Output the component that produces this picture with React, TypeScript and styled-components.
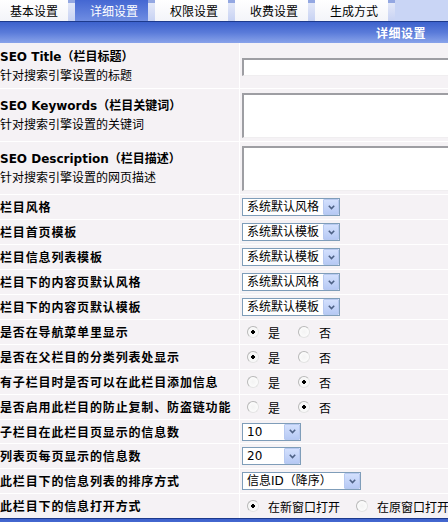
import React from 'react';
import styled, { createGlobalStyle } from 'styled-components';

const GlobalStyle = createGlobalStyle`
  html, body { margin: 0; padding: 0; background: #fff; overflow: hidden; }
  body {
    font-family: "DejaVu Sans", "Noto Sans CJK SC", sans-serif;
    font-size: 12px;
    color: #000;
  }
`;

const Page = styled.div`
  width: 448px;
  overflow: hidden;
  background: #fff;
`;

const TabStrip = styled.div`
  display: flex;
  height: 21px;
  margin-left: -5px;
  background: #c9d5f5;
  border-bottom: 1px solid #1d3a8c;
`;

const Tab = styled.div`
  display: flex;
  flex: none;
  width: 80px;
`;

const TabFace = styled.div<{ $active?: boolean }>`
  box-sizing: border-box;
  width: 73px;
  padding-left: 5px;
  display: flex;
  align-items: center;
  justify-content: center;
  font-family: "Noto Sans CJK SC", sans-serif;
  font-size: 12px;
  color: ${(p) => (p.$active ? '#fff' : '#000')};
  background: ${(p) =>
    p.$active
      ? 'linear-gradient(#4467d2, #6f8de2)'
      : 'linear-gradient(#ffffff, #f3f4f9)'};
`;

const TabGap = styled.div`
  width: 7px;
  background: linear-gradient(#93a7e2 0, #93a7e2 3px, #e3e8f8 3px, #c7d2f3 100%);
`;

const SectionBar = styled.div<{ $bottom?: boolean }>`
  box-sizing: border-box;
  height: 21px;
  display: flex;
  align-items: center;
  justify-content: flex-end;
  padding-right: 22px;
  background: linear-gradient(#3c61cc, #5a7bd9 50%, #89a3ea);
  color: #fff;
  font-family: "Noto Sans CJK SC", sans-serif;
  font-weight: bold;
  font-size: 12px;
  letter-spacing: 0.5px;
  ${(p) => (p.$bottom ? 'border-top: 1px solid #1d3a8c;' : '')}
`;

const Form = styled.div`
  display: flex;
  flex-direction: column;
  gap: 1px;
  background: #fff;
`;

const Row = styled.div<{ $h: number }>`
  display: grid;
  grid-template-columns: 239px 1fr;
  column-gap: 1px;
  height: ${(p) => p.$h}px;
`;

const LabelCell = styled.div`
  background: #f5f2f5;
  display: flex;
  flex-direction: column;
  justify-content: center;
  white-space: nowrap;
  overflow: hidden;
`;

const Label = styled.div`
  font-family: "Noto Sans CJK SC", sans-serif;
  font-weight: bold;
  font-size: 12px;
  letter-spacing: 0.85px;
  line-height: 18px;
`;

const Title = styled.div`
  font-family: "DejaVu Sans", "Noto Sans CJK SC", sans-serif;
  font-weight: bold;
  font-size: 12px;
  line-height: 18px;
`;

const SubTitle = styled.div`
  font-family: "Noto Sans CJK SC", sans-serif;
  font-size: 12px;
  line-height: 18px;
`;

const ValueCell = styled.div<{ $offset?: number }>`
  background: #f5f2f5;
  display: flex;
  align-items: center;
  padding-left: 2px;
  padding-top: ${(p) => p.$offset || 0}px;
  box-sizing: border-box;
  overflow: hidden;
  white-space: nowrap;
`;

const TextInput = styled.div<{ $h: number }>`
  flex: none;
  box-sizing: border-box;
  width: 260px;
  height: ${(p) => p.$h}px;
  background: #fff;
  border-top: 2px solid #9e9ea3;
  border-left: 2px solid #9e9ea3;
  border-right: 1px solid #f0eef0;
  border-bottom: 1px solid #f0eef0;
`;

const SelectBox = styled.div<{ $w: number }>`
  flex: none;
  box-sizing: border-box;
  width: ${(p) => p.$w}px;
  height: 18px;
  display: flex;
  align-items: center;
  background: #fff;
  border: 1px solid #7f9db9;
  padding: 0 0 0 4px;
`;

const SelectText = styled.span`
  flex: 1;
  font-family: "DejaVu Sans", "Noto Sans CJK SC", sans-serif;
  font-size: 12px;
  line-height: 16px;
  overflow: hidden;
`;

const SelectButton = styled.span`
  flex: none;
  box-sizing: border-box;
  width: 16px;
  height: 16px;
  display: flex;
  align-items: center;
  justify-content: center;
  background: linear-gradient(#d3e0fd, #b6c9f4);
  border: 1px solid #b7c9f0;
  border-radius: 1px;
`;

const RadioGroup = styled.div`
  display: flex;
  align-items: center;
  padding-left: 5px;
`;

const RadioItem = styled.label<{ $gap: number }>`
  display: flex;
  align-items: center;
  margin-right: ${(p) => p.$gap}px;
  font-family: "Noto Sans CJK SC", sans-serif;
  font-size: 12px;
`;

const RadioCircle = styled.span<{ $checked?: boolean }>`
  box-sizing: border-box;
  width: 12px;
  height: 12px;
  border-radius: 50%;
  margin-right: 9px;
  border: 1px solid #b9b9b9;
  border-right-color: #e4e4e4;
  border-bottom-color: #e4e4e4;
  background: radial-gradient(circle at 50% 50%, #000 0, #000 ${(p) => (p.$checked ? '1.6px' : '0')}, #f3f3f3 ${(p) => (p.$checked ? '1.7px' : '0')}, #ffffff 100%);
`;

const Chevron = () => (
  <svg width="7" height="5" viewBox="0 0 7 5">
    <path d="M0.8 0.8 L3.5 3.5 L6.2 0.8" fill="none" stroke="#4d6185" strokeWidth="1.6" />
  </svg>
);

const Select = ({ text, width }: { text: string; width: number }) => (
  <SelectBox $w={width}>
    <SelectText>{text}</SelectText>
    <SelectButton>
      <Chevron />
    </SelectButton>
  </SelectBox>
);

const Radios = ({ options, checked, gaps }: { options: string[]; checked: number; gaps: number[] }) => (
  <RadioGroup>
    {options.map((o, i) => (
      <RadioItem key={o} $gap={gaps[i]}>
        <RadioCircle $checked={i === checked} />
        {o}
      </RadioItem>
    ))}
  </RadioGroup>
);

const tabs = ['基本设置', '详细设置', '权限设置', '收费设置', '生成方式'];

const selectRows = [
  ['栏目风格', '系统默认风格'],
  ['栏目首页模板', '系统默认模板'],
  ['栏目信息列表模板', '系统默认模板'],
  ['栏目下的内容页默认风格', '系统默认风格'],
  ['栏目下的内容页默认模板', '系统默认模板'],
];

const radioRows: [string, number][] = [
  ['是否在导航菜单里显示', 0],
  ['是否在父栏目的分类列表处显示', 0],
  ['有子栏目时是否可以在此栏目添加信息', 1],
  ['是否启用此栏目的防止复制、防盗链功能', 1],
];

export default function App() {
  return (
    <Page>
      <GlobalStyle />
      <TabStrip>
        {tabs.map((t, i) => (
          <Tab key={t}>
            <TabFace $active={i === 1}>{t}</TabFace>
            <TabGap />
          </Tab>
        ))}
      </TabStrip>
      <SectionBar>详细设置</SectionBar>
      <Form>
        <Row $h={45}>
          <LabelCell>
            <Title>SEO Title（栏目标题）</Title>
            <SubTitle>针对搜索引擎设置的标题</SubTitle>
          </LabelCell>
          <ValueCell $offset={3}>
            <TextInput $h={18} />
          </ValueCell>
        </Row>
        <Row $h={52}>
          <LabelCell>
            <Title>SEO Keywords（栏目关键词）</Title>
            <SubTitle>针对搜索引擎设置的关键词</SubTitle>
          </LabelCell>
          <ValueCell>
            <TextInput $h={45} />
          </ValueCell>
        </Row>
        <Row $h={52}>
          <LabelCell>
            <Title>SEO Description（栏目描述）</Title>
            <SubTitle>针对搜索引擎设置的网页描述</SubTitle>
          </LabelCell>
          <ValueCell>
            <TextInput $h={45} />
          </ValueCell>
        </Row>
        {selectRows.map(([l, v]) => (
          <Row $h={24} key={l}>
            <LabelCell>
              <Label>{l}</Label>
            </LabelCell>
            <ValueCell>
              <Select text={v} width={98} />
            </ValueCell>
          </Row>
        ))}
        {radioRows.map(([l, c]) => (
          <Row $h={24} key={l}>
            <LabelCell>
              <Label>{l}</Label>
            </LabelCell>
            <ValueCell>
              <Radios options={['是', '否']} checked={c} gaps={[18, 0]} />
            </ValueCell>
          </Row>
        ))}
        <Row $h={23}>
          <LabelCell>
            <Label>子栏目在此栏目页显示的信息数</Label>
          </LabelCell>
          <ValueCell>
            <Select text="10" width={59} />
          </ValueCell>
        </Row>
        <Row $h={24}>
          <LabelCell>
            <Label>列表页每页显示的信息数</Label>
          </LabelCell>
          <ValueCell>
            <Select text="20" width={59} />
          </ValueCell>
        </Row>
        <Row $h={24}>
          <LabelCell>
            <Label>此栏目下的信息列表的排序方式</Label>
          </LabelCell>
          <ValueCell>
            <Select text="信息ID（降序）" width={119} />
          </ValueCell>
        </Row>
        <Row $h={24}>
          <LabelCell>
            <Label>此栏目下的信息打开方式</Label>
          </LabelCell>
          <ValueCell>
            <Radios options={['在新窗口打开', '在原窗口打开']} checked={0} gaps={[16, 0]} />
          </ValueCell>
        </Row>
      </Form>
      <SectionBar $bottom />
    </Page>
  );
}
